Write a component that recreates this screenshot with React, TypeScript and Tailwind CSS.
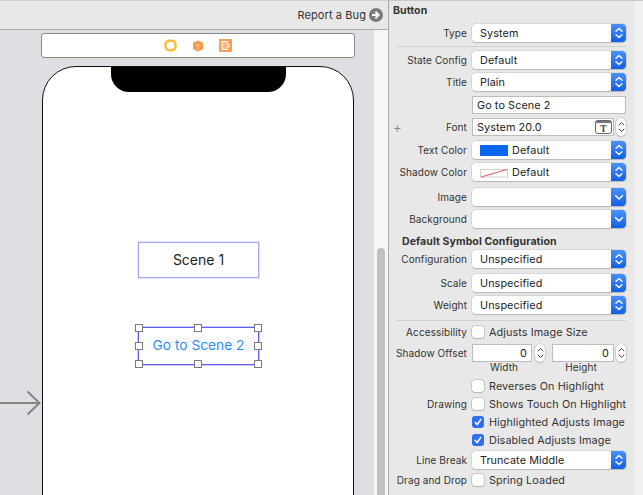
import React from "react";

const Updown = () => (
  <svg width="18" height="18" viewBox="0 0 18 18" fill="none" stroke="#fff" strokeWidth="1.4" strokeLinecap="round" strokeLinejoin="round">
    <path d="M6 7.2 9 4.4l3 2.8M6 10.8l3 2.8 3-2.8" />
  </svg>
);
const Down = () => (
  <svg width="18" height="18" viewBox="0 0 18 18" fill="none" stroke="#fff" strokeWidth="1.5" strokeLinecap="round" strokeLinejoin="round">
    <path d="M5.5 7.5 9 11l3.5-3.5" />
  </svg>
);

function Label({ children, className = "" }: { children?: React.ReactNode; className?: string }) {
  return <div className={"w-[78px] shrink-0 whitespace-nowrap flex justify-end text-[10px] text-[#333] " + className}>{children}</div>;
}

function Popup({ text, swatch, pulldown }: { text?: string; swatch?: "blue" | "none"; pulldown?: boolean }) {
  return (
    <div className="ml-[5px] w-[154px] h-[18px] rounded-[4px] bg-white flex items-center overflow-hidden shadow-[0_0_0_0.5px_#c4c4c4,0_1px_1px_rgba(0,0,0,0.25)]">
      <div className="flex-1 flex items-center pl-[8px] text-[#222] whitespace-nowrap">
        {swatch === "blue" && <div className="w-[28px] h-[11px] mr-[4px] bg-[#0a68f0]" />}
        {swatch === "none" && (
          <svg width="28" height="11" className="mr-[4px]" viewBox="0 0 28 11">
            <rect x="0.5" y="2.5" width="27" height="7.5" fill="#fff" stroke="#d0d0d0" />
            <path d="M1 10 27 2.5" stroke="#f2545b" strokeWidth="1" />
          </svg>
        )}
        <span className="pt-px">{text}</span>
      </div>
      <div className="w-[15px] h-full flex items-center justify-center bg-gradient-to-b from-[#4a90fb] to-[#0f5fe6]">
        <div className="shrink-0">{pulldown ? <Down /> : <Updown />}</div>
      </div>
    </div>
  );
}

function Field({ children, className = "" }: { children?: React.ReactNode; className?: string }) {
  return (
    <div className={"h-[18px] bg-white border border-[#bdbdbd] flex items-center text-[#222] whitespace-nowrap " + className}>
      {children}
    </div>
  );
}

const Stepper = ({ className = "" }: { className?: string }) => (
  <div className={"w-[10px] h-[18px] rounded-[5px] bg-white shadow-[0_0_0_0.5px_#b5b5b5,0_1px_1px_rgba(0,0,0,0.2)] flex items-center justify-center " + className}>
    <svg width="9" height="16" viewBox="0 0 9 16" fill="none" stroke="#444" strokeWidth="1" strokeLinecap="round" strokeLinejoin="round">
      <path d="M2 6 4.5 3.5 7 6M2 10l2.5 2.5L7 10" />
    </svg>
  </div>
);

function Check({ text, checked }: { text: string; checked?: boolean }) {
  return (
    <div className="flex items-center ml-[5px] whitespace-nowrap text-[#333]">
      <div
        className={
          "w-[12px] h-[12px] rounded-[3px] flex items-center justify-center mr-[5px] " +
          (checked ? "bg-[#2f6fee]" : "bg-white shadow-[0_0_0_0.5px_#a8a8a8,0_1px_1px_rgba(0,0,0,0.15)]")
        }
      >
        {checked && (
          <svg width="10" height="10" viewBox="0 0 10 10" fill="none" stroke="#fff" strokeWidth="1.6" strokeLinecap="round" strokeLinejoin="round">
            <path d="M2.3 5.4 4.2 7.6 7.8 2.4" />
          </svg>
        )}
      </div>
      <span className="pt-px">{text}</span>
    </div>
  );
}

const Handle = ({ className }: { className: string }) => (
  <div className={"absolute w-[8px] h-[8px] bg-white border border-[#7a7a7a] " + className} />
);

export default function App() {
  return (
    <div
      className="w-[643px] h-[495px] overflow-hidden flex bg-[#e8e8e8] text-[10.8px] leading-[14px] tracking-[0.1px]"
      style={{ fontFamily: "Inter, 'Liberation Sans', sans-serif" }}
    >
      {/* Left: canvas */}
      <div className="w-[388px] shrink-0 flex flex-col">
        <div className="h-[30px] shrink-0 bg-[#e8e8e8] border-t border-t-[#d0d0d0] border-b border-[#a9a9a9] flex items-center justify-end pr-[5px] text-[#333] text-[11px]">
          Report a Bug
          <svg width="14" height="14" viewBox="0 0 14 14" className="ml-[3px]">
            <circle cx="7" cy="7" r="7" fill="#7b7b7b" />
            <path d="M3 7h6M6.4 3.8 9.6 7l-3.2 3.2" fill="none" stroke="#fff" strokeWidth="2" strokeLinejoin="miter" />
          </svg>
        </div>
        <div className="flex-1 flex min-h-0 relative">
          <div className="flex-1 bg-[#dedfe3] pt-[3px] pl-[41px] overflow-hidden">
            <div className="w-[314px] h-[25px] bg-white rounded-[3px] border border-[#8a8a8a] flex items-center justify-center gap-[15px]">
              <svg width="13" height="13" viewBox="0 0 13 13">
                <rect x="1.5" y="1.8" width="10" height="9.4" rx="3.6" fill="#fff" stroke="#fdbd39" strokeWidth="2.4" />
              </svg>
              <svg width="12" height="12" viewBox="0 0 12 12">
                <path d="M6 .5 11 2.8v6.4L6 11.5 1 9.2V2.8z" fill="#f59a4c" />
                <path d="M6 4v6M3.4 4.5 6 5.6M8.6 4.5 6 5.6" stroke="#fbd3ae" strokeWidth="0.8" fill="none" />
              </svg>
              <svg width="13" height="13" viewBox="0 0 13 13">
                <rect width="13" height="13" fill="#f9a058" />
                <path d="M3 2.5h5.5v2.5h1.5v3H8.5v2.5H3z" fill="#fff" fillOpacity="0.25" stroke="#fff" strokeWidth="1" />
              </svg>
            </div>
            {/* Device */}
            <div className="relative w-[312px] h-[480px] mt-[8px] ml-[1px] bg-white border border-[#111] rounded-t-[34px]">
              <div className="absolute left-[68px] top-0 w-[175px] h-[25px] bg-black rounded-b-[18px]" />
              <div className="absolute left-[95px] top-[175px] w-[121px] h-[36px] border border-[#a4a4fa] shadow-[0_0_0_1px_rgba(170,170,250,0.3)] flex items-center justify-center text-[14px] text-[#222] tracking-normal">
                Scene 1
              </div>
              <div className="absolute left-[95px] top-[260px] w-[121px] h-[38px] border border-[#5f5ff0] shadow-[0_0_0_1px_rgba(95,95,240,0.35)] flex items-center justify-center pb-[2px] text-[13.75px] text-[#2b8cff] tracking-normal">
                Go to Scene 2
                <Handle className="-left-[4px] -top-[4px]" />
                <Handle className="left-[55px] -top-[4px]" />
                <Handle className="-right-[4px] -top-[4px]" />
                <Handle className="-left-[4px] top-[14px]" />
                <Handle className="-right-[4px] top-[14px]" />
                <Handle className="-left-[4px] -bottom-[4px]" />
                <Handle className="left-[55px] -bottom-[4px]" />
                <Handle className="-right-[4px] -bottom-[4px]" />
              </div>
            </div>
          </div>
          {/* Entry arrow */}
          <svg className="absolute left-0 top-[359px]" width="42" height="28" viewBox="0 0 42 28" fill="none" stroke="#858585" strokeWidth="2">
            <path d="M0 14h39M27.5 2.5 39.5 14 27.5 25.5" />
          </svg>
          {/* Scrollbar */}
          <div className="w-[14px] shrink-0 bg-[#f6f6f6] flex flex-col justify-end px-[3px]">
            <div className="h-[249px] -mb-[2px] bg-[#c1c1c1] rounded-t-[4px]" />
          </div>
        </div>
      </div>

      {/* Right: inspector */}
      <div className="flex-1 flex border-l border-[#a9a9a9] border-t border-t-[#c8c8c8] min-w-0">
        <div className="w-[246px] shrink-0 pt-[3px]">
          <div className="pl-[4px] h-[13px] flex items-center font-bold text-[#333] text-[10.5px]">Button</div>
          <div className="flex items-center mt-[7px]"><Label>Type</Label><Popup text="System" /></div>
          <div className="ml-[7px] mr-[9px] h-px bg-[#d0d0d0] mt-[4px]" />
          <div className="flex items-center mt-[4px]"><Label>State Config</Label><Popup text="Default" /></div>
          <div className="flex items-center mt-[4px]"><Label>Title</Label><Popup text="Plain" /></div>
          <div className="flex items-center mt-[5px]"><Label /><Field className="ml-[5px] w-[154px] pl-[4px] pt-px">Go to Scene 2</Field></div>
          <div className="flex items-center mt-[4px] relative">
            <span className="absolute left-[4px] text-[#888] text-[13px]">+</span>
            <Label>Font</Label>
            <Field className="ml-[5px] w-[142px] pl-[4px] justify-between pr-[1px]">
              <span className="pt-px">System 20.0</span>
              <svg width="17" height="14" viewBox="0 0 17 14">
                <rect x="0.5" y="0.5" width="16" height="13" rx="2" fill="#fff" stroke="#666" />
                <rect x="1" y="1" width="15" height="2" fill="#777" />
                <text x="8.5" y="12" textAnchor="middle" fontSize="9.5" fontWeight="700" fill="#444" fontFamily="Liberation Serif, serif">T</text>
              </svg>
            </Field>
            <Stepper className="ml-[2px]" />
          </div>
          <div className="flex items-center mt-[5px]"><Label>Text Color</Label><Popup text="Default" swatch="blue" /></div>
          <div className="flex items-center mt-[4px]"><Label>Shadow Color</Label><Popup text="Default" swatch="none" /></div>
          <div className="flex items-center mt-[7px]"><Label>Image</Label><Popup pulldown /></div>
          <div className="flex items-center mt-[4px]"><Label>Background</Label><Popup pulldown /></div>
          <div className="pl-[13px] h-[14px] flex items-center font-bold text-[#333] text-[10.5px] mt-[7px]">Default Symbol Configuration</div>
          <div className="flex items-center mt-[1px]"><Label>Configuration</Label><Popup text="Unspecified" /></div>
          <div className="flex items-center mt-[6px]"><Label>Scale</Label><Popup text="Unspecified" /></div>
          <div className="flex items-center mt-[4px]"><Label>Weight</Label><Popup text="Unspecified" /></div>
          <div className="ml-[7px] mr-[9px] h-px bg-[#d0d0d0] mt-[6px]" />
          <div className="flex items-center mt-[4px] h-[14px]"><Label>Accessibility</Label><Check text="Adjusts Image Size" /></div>
          <div className="flex items-center mt-[5px]">
            <Label>Shadow Offset</Label>
            <Field className="ml-[5px] w-[60px] justify-end pr-[4px] pt-px">0</Field>
            <Stepper className="ml-[3px]" />
            <Field className="ml-[7px] w-[62px] justify-end pr-[4px] pt-px">0</Field>
            <Stepper className="ml-[2px]" />
          </div>
          <div className="flex mt-[-2px] h-[14px] text-[10px] text-[#333]">
            <div className="w-[83px] shrink-0" />
            <div className="w-[70px] text-center pr-[6px]">Width</div>
            <div className="w-[74px] text-center pr-[2px] ml-[3px]">Height</div>
          </div>
          <div className="flex items-center mt-[5px] h-[14px]"><Label /><Check text="Reverses On Highlight" /></div>
          <div className="flex items-center mt-[4px] h-[14px]"><Label>Drawing</Label><Check text="Shows Touch On Highlight" /></div>
          <div className="flex items-center mt-[4px] h-[14px]"><Label /><Check text="Highlighted Adjusts Image" checked /></div>
          <div className="flex items-center mt-[4px] h-[14px]"><Label /><Check text="Disabled Adjusts Image" checked /></div>
          <div className="flex items-center mt-[4px]"><Label>Line Break</Label><Popup text="Truncate Middle" /></div>
          <div className="flex items-center mt-[4px] h-[14px]"><Label>Drag and Drop</Label><Check text="Spring Loaded" /></div>
        </div>
        <div className="flex-1 bg-[#f1f1f1]" />
      </div>
    </div>
  );
}
